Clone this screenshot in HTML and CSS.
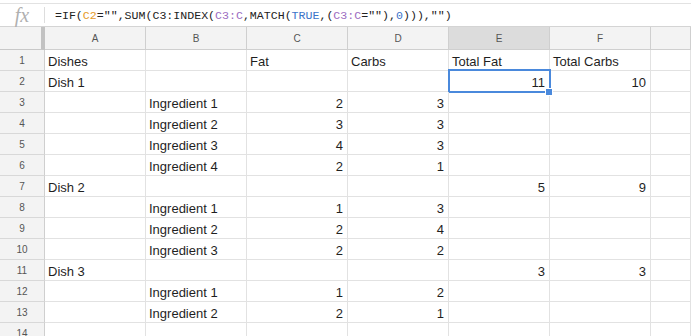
FILE: index.html
```html
<!DOCTYPE html>
<html>
<head>
    <title>Dishes - Sheet</title>
    <link rel="stylesheet" href="styles.css">
</head>
<body>
    <div class="topstrip"></div>
    <div class="formula-bar">
        <span class="fx">fx</span>
        <span class="divider"></span>
        <span class="formula">=IF(<span class="ref-orange">C2</span>="",SUM(C3:INDEX(<span class="ref-purple">C3:C</span>,MATCH(<span class="kw">TRUE</span>,(<span class="ref-purple">C3:C</span>=""),<span class="kw">0</span>))),"")</span>
    </div>

    <div class="sheet">
        <div class="hdr corner"></div>
        <div class="hdr col">A</div>
        <div class="hdr col">B</div>
        <div class="hdr col">C</div>
        <div class="hdr col">D</div>
        <div class="hdr col active">E</div>
        <div class="hdr col">F</div>
        <div class="hdr col"></div>

        <div class="hdr row">1</div>
        <div class="cell">Dishes</div><div class="cell"></div><div class="cell">Fat</div><div class="cell">Carbs</div><div class="cell">Total Fat</div><div class="cell">Total Carbs</div><div class="cell"></div>

        <div class="hdr row">2</div>
        <div class="cell">Dish 1</div><div class="cell"></div><div class="cell"></div><div class="cell"></div><div class="cell num selected">11<span class="handle"></span></div><div class="cell num">10</div><div class="cell"></div>

        <div class="hdr row">3</div>
        <div class="cell"></div><div class="cell">Ingredient 1</div><div class="cell num">2</div><div class="cell num">3</div><div class="cell"></div><div class="cell"></div><div class="cell"></div>

        <div class="hdr row">4</div>
        <div class="cell"></div><div class="cell">Ingredient 2</div><div class="cell num">3</div><div class="cell num">3</div><div class="cell"></div><div class="cell"></div><div class="cell"></div>

        <div class="hdr row">5</div>
        <div class="cell"></div><div class="cell">Ingredient 3</div><div class="cell num">4</div><div class="cell num">3</div><div class="cell"></div><div class="cell"></div><div class="cell"></div>

        <div class="hdr row">6</div>
        <div class="cell"></div><div class="cell">Ingredient 4</div><div class="cell num">2</div><div class="cell num">1</div><div class="cell"></div><div class="cell"></div><div class="cell"></div>

        <div class="hdr row">7</div>
        <div class="cell">Dish 2</div><div class="cell"></div><div class="cell"></div><div class="cell"></div><div class="cell num">5</div><div class="cell num">9</div><div class="cell"></div>

        <div class="hdr row">8</div>
        <div class="cell"></div><div class="cell">Ingredient 1</div><div class="cell num">1</div><div class="cell num">3</div><div class="cell"></div><div class="cell"></div><div class="cell"></div>

        <div class="hdr row">9</div>
        <div class="cell"></div><div class="cell">Ingredient 2</div><div class="cell num">2</div><div class="cell num">4</div><div class="cell"></div><div class="cell"></div><div class="cell"></div>

        <div class="hdr row">10</div>
        <div class="cell"></div><div class="cell">Ingredient 3</div><div class="cell num">2</div><div class="cell num">2</div><div class="cell"></div><div class="cell"></div><div class="cell"></div>

        <div class="hdr row">11</div>
        <div class="cell">Dish 3</div><div class="cell"></div><div class="cell"></div><div class="cell"></div><div class="cell num">3</div><div class="cell num">3</div><div class="cell"></div>

        <div class="hdr row">12</div>
        <div class="cell"></div><div class="cell">Ingredient 1</div><div class="cell num">1</div><div class="cell num">2</div><div class="cell"></div><div class="cell"></div><div class="cell"></div>

        <div class="hdr row">13</div>
        <div class="cell"></div><div class="cell">Ingredient 2</div><div class="cell num">2</div><div class="cell num">1</div><div class="cell"></div><div class="cell"></div><div class="cell"></div>

        <div class="hdr row">14</div>
        <div class="cell"></div><div class="cell"></div><div class="cell"></div><div class="cell"></div><div class="cell"></div><div class="cell"></div><div class="cell"></div>
    </div>
</body>
</html>
```

FILE: styles.css
```css
body {
    margin: 0;
    padding: 0;
    background-color: white;
    font-family: "Liberation Sans", Arial, sans-serif;
    color: #222;
    overflow: hidden;
}

.topstrip {
    height: 3px;
    border-bottom: 1px solid #e2e2e2;
}

.formula-bar {
    height: 22px;
    display: flex;
    align-items: center;
    border-bottom: 1px solid #d4d4d4;
}

.fx {
    width: 44px;
    text-align: center;
    font-family: "Liberation Serif", serif;
    font-style: italic;
    font-size: 20px;
    color: #b0b0b0;
    line-height: 22px;
}

.divider {
    width: 1px;
    height: 16px;
    background-color: #ddd;
}

.formula {
    margin-left: 10px;
    font-family: "Liberation Mono", monospace;
    font-size: 11.6px;
    color: #222;
    white-space: pre;
}

.ref-orange {
    color: #e69b2b;
}

.ref-purple {
    color: #9c6cc1;
}

.kw {
    color: #3b74c9;
}

.sheet {
    display: grid;
    grid-template-columns: 45px repeat(6, 101px) 1fr;
    grid-template-rows: 23px repeat(14, 21px);
}

.hdr {
    background-color: #f3f3f3;
    border-right: 1px solid #cfcfcf;
    border-bottom: 1px solid #cfcfcf;
    font-size: 10px;
    color: #555;
    display: flex;
    align-items: center;
    justify-content: center;
}

.hdr.corner {
    border-right: 4px solid #c2c2c2;
    border-bottom: 1px solid #c8c8c8;
}

.hdr.col {
    padding-top: 1px;
}

.hdr.active {
    background-color: #dcdcdc;
}

.hdr.row {
    border-right: 1px solid #cfcfcf;
    border-bottom: 1px solid #d8d8d8;
    padding-top: 1px;
}

.cell {
    position: relative;
    border-right: 1px solid #e2e2e2;
    border-bottom: 1px solid #e2e2e2;
    font-size: 13px;
    line-height: 18px;
    padding: 3px 3px 0;
    white-space: nowrap;
    color: #1f1f1f;
}

.cell.num {
    text-align: right;
    padding-right: 4px;
}

.selected::after {
    content: "";
    position: absolute;
    left: -1px;
    top: -2px;
    right: -2px;
    bottom: -2px;
    border: 2px solid #4a89dc;
}

.handle {
    position: absolute;
    right: -4px;
    bottom: -5px;
    width: 6px;
    height: 6px;
    background-color: #4a89dc;
    border: 1px solid white;
    z-index: 2;
}
```
